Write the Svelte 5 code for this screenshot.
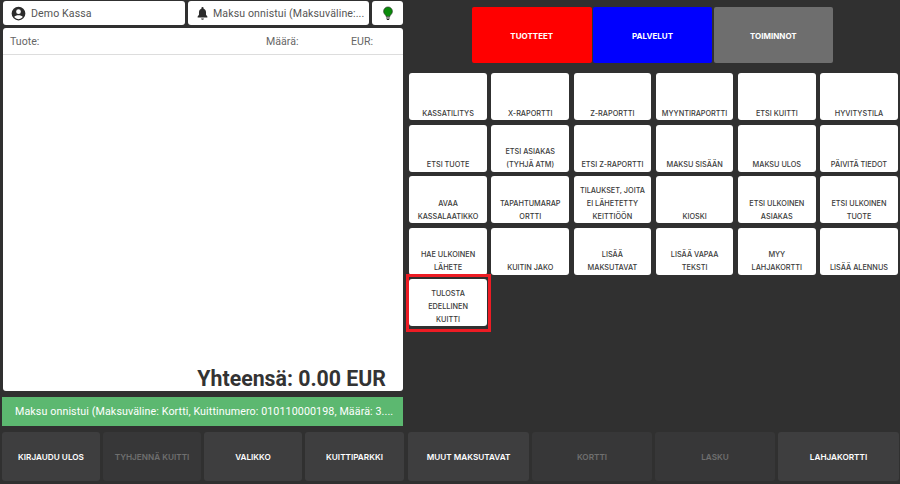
<script>
  const categories = [
    { label: 'TUOTTEET', color: '#ff0000' },
    { label: 'PALVELUT', color: '#0000ff' },
    { label: 'TOIMINNOT', color: '#6e6e6e' }
  ];

  const actions = [
    ['KASSATILITYS'], ['X-RAPORTTI'], ['Z-RAPORTTI'], ['MYYNTIRAPORTTI'], ['ETSI KUITTI'], ['HYVITYSTILA'],
    ['ETSI TUOTE'], ['ETSI ASIAKAS', '(TYHJÄ ATM)'], ['ETSI Z-RAPORTTI'], ['MAKSU SISÄÄN'], ['MAKSU ULOS'], ['PÄIVITÄ TIEDOT'],
    ['AVAA', 'KASSALAATIKKO'], ['TAPAHTUMARAP', 'ORTTI'], ['TILAUKSET, JOITA', 'EI LÄHETETTY', 'KEITTIÖÖN'], ['KIOSKI'], ['ETSI ULKOINEN', 'ASIAKAS'], ['ETSI ULKOINEN', 'TUOTE'],
    ['HAE ULKOINEN', 'LÄHETE'], ['KUITIN JAKO'], ['LISÄÄ', 'MAKSUTAVAT'], ['LISÄÄ VAPAA', 'TEKSTI'], ['MYY', 'LAHJAKORTTI'], ['LISÄÄ ALENNUS'],
    ['TULOSTA', 'EDELLINEN', 'KUITTI']
  ];

  const footer = [
    { label: 'KIRJAUDU ULOS' },
    { label: 'TYHJENNÄ KUITTI', off: true },
    { label: 'VALIKKO' },
    { label: 'KUITTIPARKKI' },
    { label: 'MUUT MAKSUTAVAT' },
    { label: 'KORTTI', off: true },
    { label: 'LASKU', off: true },
    { label: 'LAHJAKORTTI' }
  ];
</script>

<div class="page">
  <div class="main">
    <section class="left">
      <div class="topbar">
        <div class="chip user">
          <svg width="15" height="15" viewBox="0 0 24 24"><path fill="#2b2b2b" d="M12 1a11 11 0 1 0 0 22 11 11 0 0 0 0-22zm0 4.200a3.800 3.800 0 1 1 0 7.600 3.800 3.800 0 0 1 0-7.600zM12 21a8.900 8.900 0 0 1-6.900-3.300c.9-1.900 4.100-2.900 6.900-2.900s6 1 6.900 2.900A8.900 8.900 0 0 1 12 21z"/></svg>
          <span>Demo Kassa</span>
        </div>
        <div class="chip note">
          <svg width="11" height="13" viewBox="0 0 20 24"><path fill="#2b2b2b" d="M10 23.500a2.600 2.600 0 0 0 2.600-2.500H7.400A2.600 2.600 0 0 0 10 23.500zm9-6-2.500-3V9.500c0-3.200-1.800-5.800-4.500-6.500V2a2 2 0 0 0-4 0v1C5.300 3.700 3.500 6.300 3.500 9.500v5l-2.500 3V19.500h18z"/></svg>
          <span>Maksu onnistui (Maksuväline:...</span>
        </div>
        <div class="chip bulb">
          <svg width="10" height="15" viewBox="0 0 12 17"><path fill="#0a8a0a" stroke="#222" stroke-width="0.7" d="M6 .6a5.300 5.300 0 0 0-5.300 5.300c0 2.100 1.200 3.400 2.200 4.500.6.600.8 1.100.8 1.800h4.600c0-.7.200-1.200.8-1.800 1-1.100 2.200-2.400 2.200-4.500A5.300 5.300 0 0 0 6 .6z"/><path fill="#222" d="M3.800 13.200h4.400v1.200H3.800zM4.600 15.200h2.800v1.100H4.600z"/></svg>
        </div>
      </div>

      <div class="receipt">
        <div class="receipt-head">
          <span class="col-name">Tuote:</span>
          <span class="col-qty">Määrä:</span>
          <span class="col-eur">EUR:</span>
        </div>
        <div class="receipt-body"></div>
        <div class="total">Yhteensä: 0.00 EUR</div>
      </div>

      <div class="message">Maksu onnistui (Maksuväline: Kortti, Kuittinumero: 010110000198, Määrä: 3....</div>
    </section>

    <section class="right">
      <div class="categories">
        {#each categories as c}
          <button class="category" style="background: {c.color}">{c.label}</button>
        {/each}
      </div>
      <div class="actions">
        {#each actions as lines, i}
          <button class="action" class:marked={i === actions.length - 1}>
            {#each lines as line}<span>{line}</span>{/each}
          </button>
        {/each}
      </div>
    </section>
  </div>

  <footer class="footer">
    {#each footer as f}
      <button class="foot" class:off={f.off}>{f.label}</button>
    {/each}
  </footer>
</div>

<style>
  :global(body) {
    margin: 0;
    background: #303030;
  }

  .page {
    width: 900px;
    height: 484px;
    background: #303030;
    display: flex;
    flex-direction: column;
    overflow: hidden;
    font-family: Roboto, sans-serif;
  }

  .main {
    display: flex;
    height: 432px;
  }

  .left {
    width: 403px;
    padding: 1px 0 0 2px;
    box-sizing: border-box;
    display: flex;
    flex-direction: column;
    flex: none;
  }

  .topbar {
    display: flex;
    gap: 3px;
    height: 24px;
    margin-left: 1px;
  }

  .chip {
    background: #fff;
    border-radius: 3px;
    display: flex;
    align-items: center;
    font-size: 10.6px;
    color: #555;
    box-sizing: border-box;
    white-space: nowrap;
    letter-spacing: 0.1px;
  }

  .user {
    width: 182px;
    padding-left: 8px;
    gap: 5px;
  }

  .note {
    width: 181px;
    padding-left: 9px;
    gap: 5px;
  }

  .bulb {
    width: 31px;
    justify-content: center;
  }

  .receipt {
    margin: 3px 0 0 1px;
    height: 363px;
    background: #fff;
    border-radius: 3px;
    display: flex;
    flex-direction: column;
  }

  .receipt-head {
    height: 26px;
    border-bottom: 1px solid #ddd;
    display: flex;
    align-items: center;
    font-size: 10.6px;
    color: #666;
    flex: none;
  }

  .col-name {
    margin-left: 7px;
    width: 256px;
  }

  .col-qty {
    width: 85px;
  }

  .receipt-body {
    flex: 1;
  }

  .total {
    font-size: 21.3px;
    font-weight: 700;
    color: #333;
    text-align: right;
    padding-right: 17px;
    line-height: 27px;
    height: 26px;
  }

  .message {
    margin-top: 6px;
    height: 29px;
    background: #5cb870;
    color: #fff;
    font-size: 10.700px;
    line-height: 29px;
    padding-left: 13px;
    white-space: nowrap;
    overflow: hidden;
    letter-spacing: 0.1px;
  }

  .right {
    flex: 1;
    padding: 7px 3px 0 6.3px;
    box-sizing: border-box;
  }

  button {
    border: none;
    padding: 0;
    margin: 0;
    font-family: Inter, sans-serif;
  }

  .categories {
    display: flex;
    gap: 1.2px;
    margin-left: 62.7px;
  }

  .category {
    width: 119.6px;
    height: 56px;
    border-radius: 2px;
    color: #fff;
    font-size: 8px;
    font-weight: 700;
    padding-top: 2px;
  }

  .actions {
    display: grid;
    grid-template-columns: repeat(6, 77.5px);
    grid-auto-rows: 47px;
    column-gap: 4.7px;
    row-gap: 4.500px;
    margin-top: 10px;
  }

  .action {
    position: relative;
    background: #fff;
    border-radius: 3px;
    color: #3a3a3a;
    font-size: 7.3px;
    font-weight: 500;
    display: flex;
    flex-direction: column;
    align-items: center;
    justify-content: flex-end;
    line-height: 13px;
    padding-bottom: 0.5px;
  }

  .action.marked::after {
    content: '';
    position: absolute;
    top: -5px;
    left: -3.3px;
    right: -4px;
    bottom: -6px;
    border: 3.5px solid #ed1c24;
    pointer-events: none;
  }

  .footer {
    display: grid;
    grid-template-columns: 98px 98px 98px 99px 122px 120px 120px 121px;
    column-gap: 3px;
    height: 49px;
    padding-left: 2px;
  }

  .foot {
    background: #3e3e3f;
    border-radius: 3px;
    color: #fff;
    font-size: 8.2px;
    font-weight: 600;
  }

  .foot:nth-child(5) {
    margin-left: 1px;
  }

  .foot.off {
    background: #373738;
    color: #6f6f6f;
  }
</style>
